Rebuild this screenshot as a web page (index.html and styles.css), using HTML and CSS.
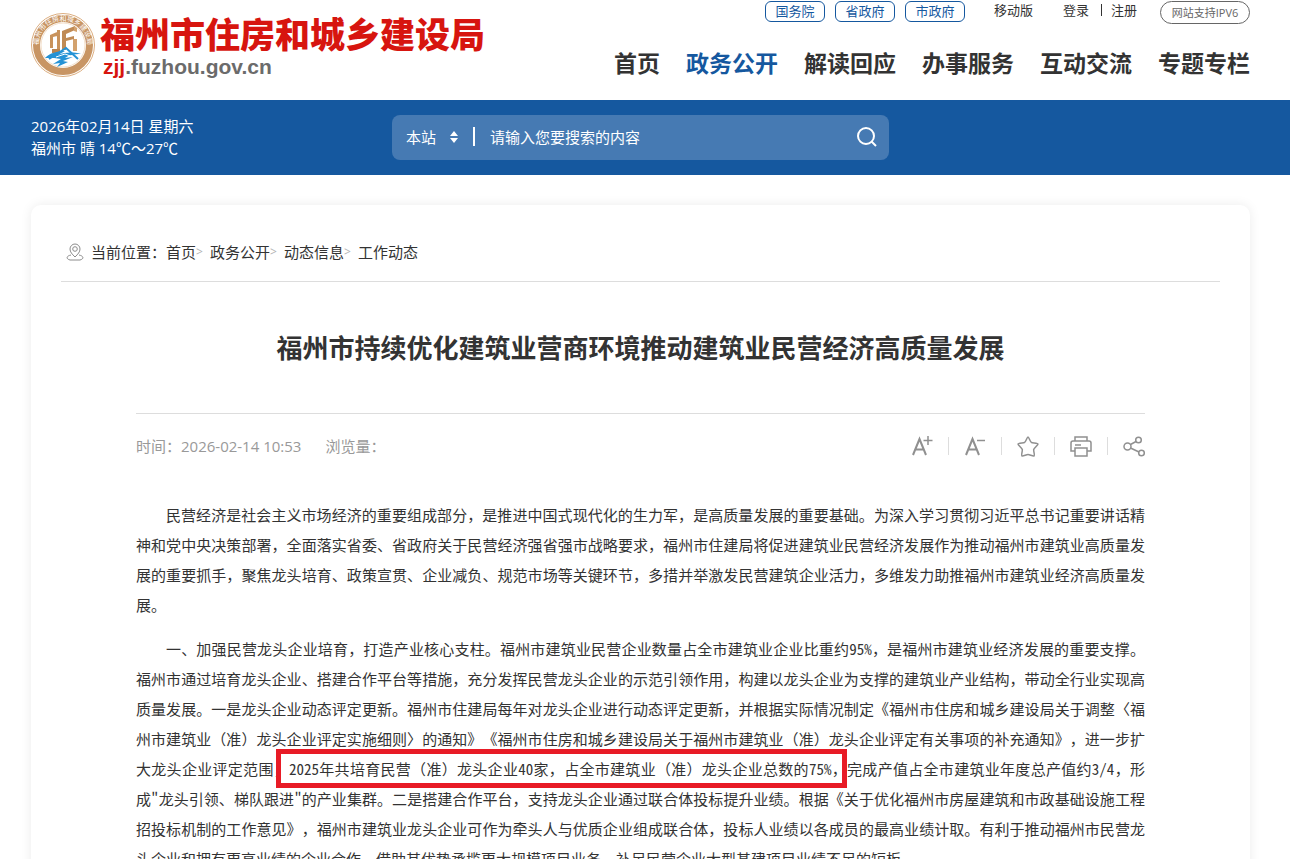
FILE: index.html
```html
<!DOCTYPE html>
<html lang="zh-CN">
<head>
<meta charset="utf-8">
<title>福州市住房和城乡建设局</title>
<link rel="stylesheet" href="styles.css">
</head>
<body>
<header class="header">
  <a class="brand" href="#">
    <svg class="emblem" viewBox="0 0 66 68" aria-hidden="true">
      <defs><path id="arc" d="M9.500 41A24.500 24.500 0 1 1 56.500 41"/></defs>
      <circle cx="33" cy="34" r="31.500" fill="#fff" stroke="#dcae80" stroke-width="1"/>
      <circle cx="33" cy="34" r="26.500" fill="#fff" stroke="#c89564" stroke-width="7"/>
      <circle cx="33" cy="34" r="22" fill="none" stroke="#f3dfca" stroke-width="1"/>
      <text class="emblem-text"><textPath href="#arc" startOffset="50%">福州市住房和城乡建设局</textPath></text>
      <path d="M27 19h3v19h-3zM20 24l7-3v4l-4 1v11h-3z" fill="#c9935c"/>
      <path d="M22 38h8v4h-8z" fill="#b98450"/>
      <path d="M32 20l13-5v4l-9 4v4l8-2v3l-8 2v9h-4z" fill="#c08b55"/>
      <path d="M44 15l3 2v4l-3-1zM43 28h4v12h-4z" fill="#d3a26e"/>
      <path d="M15 47c5-5 12-7 20-7l-7 4c8-3 15-3 23-1-7 0-12 1-16 4l8-1-10 4 5 1-11 5 3-4-7 1 8-5-7-1z" fill="#2592d5"/>
      <path d="M19 48l17-11 12 11" fill="none" stroke="#2592d5" stroke-width="2"/>
      <path d="M26 46l9-3 8 3" fill="none" stroke="#fff"/>
    </svg>
    <span class="brand-text">
      <span class="brand-name">福州市住房和城乡建设局</span>
      <span class="brand-url"><b class="brand-sub">zjj</b>.fuzhou.gov.cn</span>
    </span>
  </a>
  <div class="header-right">
    <div class="top-links">
      <a class="tag" href="#">国务院</a>
      <a class="tag" href="#">省政府</a>
      <a class="tag" href="#">市政府</a>
      <a class="mobile" href="#">移动版</a>
      <span class="account"><a href="#">登录</a><i class="bar"></i><a href="#">注册</a></span>
      <span class="ipv6">网站支持IPV6</span>
    </div>
    <nav class="nav">
      <a href="#">首页</a>
      <a class="active" href="#">政务公开</a>
      <a href="#">解读回应</a>
      <a href="#">办事服务</a>
      <a href="#">互动交流</a>
      <a href="#">专题专栏</a>
    </nav>
  </div>
</header>
<section class="band">
  <div class="today"><div>2026年02月14日 星期六</div><div>福州市 晴 14℃～27℃</div></div>
  <form class="search">
    <span class="scope">
      <select class="scope-select" aria-label="搜索范围"><option>本站</option></select>
      <svg class="sort" viewBox="0 0 8 12" aria-hidden="true"><path d="M4 0l4 5H0zM4 12L0 7h8z" fill="#fff"/></svg>
    </span>
    <input class="query" type="text" aria-label="搜索" placeholder="请输入您要搜索的内容">
    <button class="go" type="button" aria-label="搜索">
      <svg viewBox="0 0 20 20" width="20" height="20" fill="none" stroke="#fff" stroke-width="2"><circle cx="9" cy="9" r="8"/><path d="M14.500 14.500L19 19"/></svg>
    </button>
  </form>
</section>
<main class="card">
  <nav class="crumbs" aria-label="当前位置">
    <svg class="pin" viewBox="0 0 18 18" fill="none" stroke="#8c8c8c"><path d="M9 14C6 11 4 9 4 6a5 5 0 0 1 10 0c0 3-2 5-5 8z"/><circle cx="9" cy="6" r="2.300"/><path d="M5 12c-5 1-5 4-1 5h10c4-1 4-4-1-5"/></svg>
    <span>当前位置：</span><a href="#">首页</a><i class="sep">&gt;</i><a href="#">政务公开</a><i class="sep">&gt;</i><a href="#">动态信息</a><i class="sep">&gt;</i><a href="#">工作动态</a>
  </nav>
  <article class="article">
    <h1 class="title">福州市持续优化建筑业营商环境推动建筑业民营经济高质量发展</h1>
    <div class="meta">
      <span>时间：2026-02-14 10:53</span><span class="views">浏览量：</span>
      <div class="tools">
        <button class="tool" type="button" aria-label="放大字号"><svg viewBox="0 0 22 22"><path d="M2 20L8.500 4 15 20M4.500 14.500h8" stroke-width="2"/><path d="M17 1v9M12.500 5.500h9"/></svg></button>
        <button class="tool" type="button" aria-label="缩小字号"><svg viewBox="0 0 22 22"><path d="M2 20L8.500 4 15 20M4.500 14.500h8" stroke-width="2"/><path d="M13 5.500h8"/></svg></button>
        <button class="tool" type="button" aria-label="收藏"><svg viewBox="0 0 22 22"><path d="M11 2c1 0 2 5 3.500 5.500S21 8 21 9s-4 4-4.300 5.500S18 20.500 17 21s-4.500-1.500-6-1.500S6 21.500 5 21s.6-5 .3-6.500S1 10 1 9s5-1 6.500-1.500S10 2 11 2z"/></svg></button>
        <button class="tool" type="button" aria-label="打印"><svg viewBox="0 0 22 22"><path d="M5 6V2h12v4M5 16H1V8q0-2 2-2h16q2 0 2 2v8h-4M5 13h12v8H5zM5 10h6"/></svg></button>
        <button class="tool" type="button" aria-label="分享"><svg viewBox="0 0 22 22"><circle cx="4.500" cy="11.500" r="3.500"/><circle cx="15.500" cy="5" r="2.800"/><circle cx="18.500" cy="18" r="2.800"/><path d="M7.500 9.500l5.500-3M7.500 13l8.500 4"/></svg></button>
      </div>
    </div>
    <div class="body">
      <p>民营经济是社会主义市场经济的重要组成部分，是推进中国式现代化的生力军，是高质量发展的重要基础。为深入学习贯彻习近平总书记重要讲话精神和党中央决策部署，全面落实省委、省政府关于民营经济强省强市战略要求，福州市住建局将促进建筑业民营经济发展作为推动福州市建筑业高质量发展的重要抓手，聚焦龙头培育、政策宣贯、企业减负、规范市场等关键环节，多措并举激发民营建筑企业活力，多维发力助推福州市建筑业经济高质量发展。</p>
      <p>一、加强民营龙头企业培育，打造产业核心支柱。福州市建筑业民营企业数量占全市建筑业企业比重约<span class="half">95%</span>，是福州市建筑业经济发展的重要支撑。福州市通过培育龙头企业、搭建合作平台等措施，充分发挥民营龙头企业的示范引领作用，构建以龙头企业为支撑的建筑业产业结构，带动全行业实现高质量发展。一是龙头企业动态评定更新。福州市住建局每年对龙头企业进行动态评定更新，并根据实际情况制定《福州市住房和城乡建设局关于调整〈福州市建筑业（准）龙头企业评定实施细则〉的通知》《福州市住房和城乡建设局关于福州市建筑业（准）龙头企业评定有关事项的补充通知》，进一步扩大龙头企业评定范围，<mark class="boxed"><span class="half">2025</span>年共培育民营（准）龙头企业<span class="half">40</span>家，占全市建筑业（准）龙头企业总数的<span class="half">75%</span>，</mark>完成产值占全市建筑业年度总产值约<span class="half">3/4</span>，形成<span class="half">"</span>龙头引领、梯队跟进<span class="half">"</span>的产业集群。二是搭建合作平台，支持龙头企业通过联合体投标提升业绩。根据《关于优化福州市房屋建筑和市政基础设施工程招投标机制的工作意见》，福州市建筑业龙头企业可作为牵头人与优质企业组成联合体，投标人业绩以各成员的最高业绩计取。有利于推动福州市民营龙头企业和拥有更高业绩的企业合作，借助其优势承揽更大规模项目业务，补足民营企业大型基建项目业绩不足的短板。</p>
    </div>
  </article>
</main>
</body>
</html>
```
FILE: styles.css
```css
* { box-sizing: border-box; }
body {
  margin: 0;
  height: 100vh;
  overflow: hidden;
  background: #fff;
  color: #333;
  font: 15px/22px "Open Sans", "Noto Sans CJK SC", sans-serif;
}
a { color: inherit; text-decoration: none; }
i { font-style: normal; }
button { border: 0; padding: 0; background: none; }

.header {
  display: flex;
  justify-content: space-between;
  height: 100px;
  padding: 0 40px 0 30px;
}
.brand { display: flex; gap: 4px; padding-top: 11px; }
.emblem { width: 66px; height: 68px; }
.emblem-text { font-size: 7px; text-anchor: middle; fill: #fff; }
.brand-text { display: flex; flex-direction: column; }
.brand-name {
  color: #d7150f;
  font: 900 35px/44px "Noto Sans CJK SC", sans-serif;
}
.brand-url {
  padding-left: 3px;
  color: #6b6b6b;
  font: bold 21px/24px "Liberation Sans", sans-serif;
}
.brand-sub { color: #d7150f; }
.header-right { display: flex; flex-direction: column; align-items: flex-end; }
.top-links { display: flex; align-items: flex-start; font-size: 13px; line-height: 20px; }
.tag {
  width: 60px;
  margin: 1px 10px 0 0;
  border: 1px solid #15589f;
  border-radius: 6px;
  color: #15589f;
  line-height: 19px;
  text-align: center;
}
.mobile { margin: 0 30px 0 19px; }
.account { display: flex; align-items: center; margin-right: 23px; }
.bar { width: 1px; height: 12px; margin: 0 9px 0 12px; background: #333; }
.ipv6 {
  width: 90px;
  margin-top: 1px;
  border: 1px solid #666;
  border-radius: 12px;
  color: #666;
  font-size: 11px;
  line-height: 21px;
  text-align: center;
}
.nav {
  display: flex;
  gap: 26px;
  margin-top: 22px;
  font-size: 23px;
  font-weight: bold;
  line-height: 34px;
}
.active { color: #15589f; }

.band {
  display: grid;
  grid-template-columns: 361px 497px;
  align-items: center;
  height: 75px;
  padding: 0 31px;
  background: #15589f;
  color: #fff;
}
.today { padding-bottom: 2px; }
.search {
  display: flex;
  align-items: center;
  height: 45px;
  padding: 0 12px 2px 14px;
  border-radius: 8px;
  background: #467ab3;
}
.scope { display: flex; align-items: center; gap: 10px; padding-right: 15px; border-right: 2px solid #fff; height: 19px; }
.scope-select {
  width: 34px;
  padding: 0;
  border: 0;
  appearance: none;
  background: none;
  color: #fff;
  font: inherit;
}
.sort { width: 8px; height: 12px; }
.query {
  flex: 1;
  min-width: 0;
  padding: 0 0 0 15px;
  border: 0;
  outline: 0;
  background: none;
  color: #fff;
  font: inherit;
}
.query::placeholder { color: #fff; }
.go { height: 20px; }

.card {
  margin: 30px 40px 0 31px;
  padding: 30px 30px 60px;
  border-radius: 10px;
  box-shadow: 0 0 12px rgba(0, 0, 0, 0.08);
}
.crumbs {
  display: flex;
  align-items: center;
  height: 47px;
  padding: 0 0 12px 5px;
  border-bottom: 1px solid #ddd;
}
.pin { width: 18px; height: 18px; margin-right: 7px; }
.sep { width: 14px; color: #b5b5b5; font-size: 12px; }
.article { padding: 0 75px; }
.title {
  margin: 0;
  padding: 46px 0 45px;
  border-bottom: 1px solid #ddd;
  font-size: 26px;
  line-height: 40px;
  text-align: center;
}
.meta { display: flex; align-items: center; height: 64px; color: #999; }
.views { margin-left: 24px; }
.tools { display: flex; margin-left: auto; }
.tool { display: flex; align-items: center; height: 22px; }
.tool + .tool { margin-left: 15px; padding-left: 16px; background: linear-gradient(#ddd, #ddd) left center / 1px 18px no-repeat; }
.tool svg { width: 22px; height: 22px; fill: none; stroke: #909090; stroke-width: 1.5; }
.body {
  padding-top: 22px;
  font-family: "Noto Sans CJK SC", sans-serif;
  line-height: 30px;
  text-spacing-trim: space-all;
}
.body p { margin: 0 0 14px; text-align: justify; text-indent: 2em; }
.half { font-feature-settings: "hwid"; }
.boxed { position: relative; background: none; color: inherit; }
.boxed::after {
  content: "";
  position: absolute;
  inset: -9px 0 -9px -13px;
  border: 5px solid #e81b26;
}
```
